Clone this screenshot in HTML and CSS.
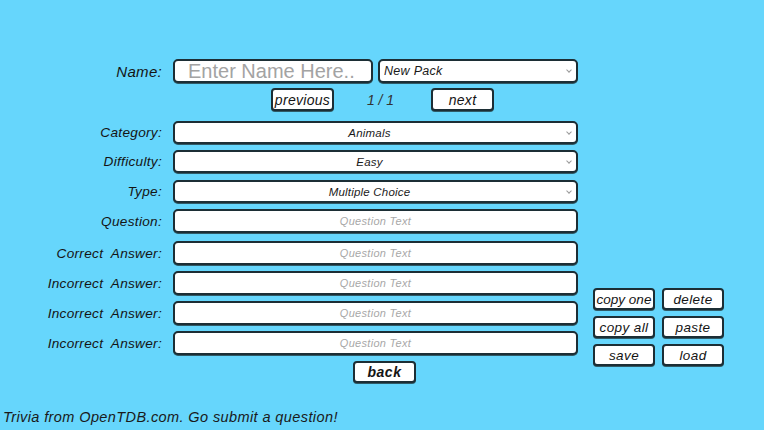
FILE: index.html
```html
<!DOCTYPE html>
<html>
<head>
<meta charset="utf-8">
<title>Trivia Pack Editor</title>
<link rel="stylesheet" href="styles.css">
</head>
<body>
<div class="page">
  <div class="form">
    <div class="row row-name">
      <label class="label label-name">Name:</label>
      <div class="name-field">
        <input class="box name-input" type="text" placeholder="Enter Name Here..">
        <div class="select-wrap pack-wrap">
          <select class="box select select-left"><option>New Pack</option></select>
        </div>
      </div>
    </div>
    <div class="row row-nav">
      <span></span>
      <div class="nav">
        <button class="btn btn-nav">previous</button>
        <span class="count">1 / 1</span>
        <button class="btn btn-nav">next</button>
      </div>
    </div>
    <div class="row row-cat">
      <label class="label">Category:</label>
      <div class="select-wrap"><select class="box select"><option>Animals</option></select></div>
    </div>
    <div class="row row-sel">
      <label class="label">Difficulty:</label>
      <div class="select-wrap"><select class="box select"><option>Easy</option></select></div>
    </div>
    <div class="row row-type">
      <label class="label">Type:</label>
      <div class="select-wrap"><select class="box select"><option>Multiple Choice</option></select></div>
    </div>
    <div class="row row-q">
      <label class="label">Question:</label>
      <input class="box text" type="text" placeholder="Question Text">
    </div>
    <div class="row row-correct">
      <label class="label">Correct Answer:</label>
      <input class="box text" type="text" placeholder="Question Text">
    </div>
    <div class="row row-q">
      <label class="label">Incorrect Answer:</label>
      <input class="box text" type="text" placeholder="Question Text">
    </div>
    <div class="row row-q">
      <label class="label">Incorrect Answer:</label>
      <input class="box text" type="text" placeholder="Question Text">
    </div>
    <div class="row row-q">
      <label class="label">Incorrect Answer:</label>
      <input class="box text" type="text" placeholder="Question Text">
    </div>
    <div class="row row-back">
      <span></span>
      <div class="back-cell"><button class="btn btn-back">back</button></div>
    </div>
  </div>
  <div class="side">
    <button class="btn btn-side btn-tight">copy one</button>
    <button class="btn btn-side">delete</button>
    <button class="btn btn-side">copy all</button>
    <button class="btn btn-side">paste</button>
    <button class="btn btn-side">save</button>
    <button class="btn btn-side">load</button>
  </div>
</div>
<footer class="footer">Trivia from OpenTDB.com. Go submit a question!</footer>
</body>
</html>
```

FILE: styles.css
```css
html, body {
  margin: 0;
  padding: 0;
}
body {
  background: #66d6fc;
  width: 764px;
  height: 430px;
  overflow: hidden;
  font-family: "Liberation Sans", Arial, sans-serif;
  color: #141414;
}
.page {
  display: flex;
  align-items: flex-start;
  padding-top: 59px;
}
.form {
  display: flex;
  flex-direction: column;
  width: 578px;
}
.row {
  display: grid;
  grid-template-columns: 162px 405px;
  column-gap: 11px;
  align-items: center;
}
.row-nav { margin-top: 5px; }
.row-cat { margin-top: 10px; }
.row-sel { margin-top: 6px; }
.row-type { margin-top: 7px; }
.row-q { margin-top: 6px; }
.row-correct { margin-top: 8px; }
.row-back { margin-top: 6px; }

.label {
  text-align: right;
  font-style: italic;
  font-size: 13.6px;
  letter-spacing: 0.3px;
  word-spacing: 4px;
  color: #141414;
}
.label-name {
  font-size: 15px;
}
.box {
  box-sizing: border-box;
  width: 100%;
  margin: 0;
  background: #fff;
  border: 2px solid #1c2e35;
  border-radius: 5px;
  box-shadow: 0 1px 0 #2f5a66;
  outline: none;
  font-family: "Liberation Sans", Arial, sans-serif;
}
.name-field {
  display: flex;
  gap: 5px;
}
.name-input {
  width: 200px;
  height: 24px;
  padding: 0 0 0 13px;
  font-size: 20px;
}
.name-input::placeholder {
  color: #a3a3a3;
}
.pack-wrap {
  width: 200px;
}
.select-wrap {
  position: relative;
}
.select-wrap::after {
  content: "";
  position: absolute;
  right: 7px;
  top: 9px;
  width: 3px;
  height: 3px;
  border-right: 1px solid #9a9a9a;
  border-bottom: 1px solid #9a9a9a;
  transform: rotate(45deg);
  pointer-events: none;
}
.select {
  appearance: none;
  -webkit-appearance: none;
  height: 23px;
  padding: 0 16px 0 4px;
  font-size: 11.5px;
  font-style: italic;
  letter-spacing: 0.2px;
  color: #1a1a1a;
  text-align: center;
  text-align-last: center;
}
.pack-wrap .select {
  height: 24px;
}
.select-left {
  text-align: left;
  text-align-last: left;
  font-size: 12.5px;
  letter-spacing: 0.3px;
}
.text {
  height: 24px;
  padding: 0 4px;
  font-size: 11px;
  font-style: italic;
  text-align: center;
  letter-spacing: 0.3px;
}
.text::placeholder {
  color: #a8a8a8;
}
.nav {
  display: flex;
  align-items: center;
  padding-left: 98px;
}
.count {
  width: 97px;
  text-align: center;
  font-style: italic;
  font-size: 14px;
  color: #333;
  padding-right: 4px;
  box-sizing: border-box;
}
.btn {
  box-sizing: border-box;
  margin: 0;
  padding: 0;
  background: #fff;
  border: 2px solid #1c2e35;
  border-radius: 4px;
  box-shadow: 0 1px 0 #2f5a66;
  font-family: "Liberation Sans", Arial, sans-serif;
  font-style: italic;
  color: #141414;
  cursor: pointer;
}
.btn-nav {
  width: 63px;
  height: 23px;
  font-size: 14px;
  letter-spacing: 0.3px;
}
.back-cell {
  padding-left: 180px;
}
.btn-back {
  width: 63px;
  height: 22px;
  font-size: 14px;
  font-weight: bold;
  letter-spacing: 0.5px;
}
.side {
  display: grid;
  grid-template-columns: 62px 62px;
  column-gap: 7px;
  row-gap: 6px;
  margin-left: 15px;
  margin-top: 229px;
}
.btn-side {
  height: 22px;
  font-size: 13.5px;
  letter-spacing: 0.4px;
}
.btn-tight {
  letter-spacing: 0;
  font-size: 13.5px;
}
.footer {
  margin-top: 25px;
  padding-left: 3px;
  font-style: italic;
  font-size: 14.5px;
  line-height: 18px;
  letter-spacing: 0.4px;
  color: #1a1a1a;
}
```
